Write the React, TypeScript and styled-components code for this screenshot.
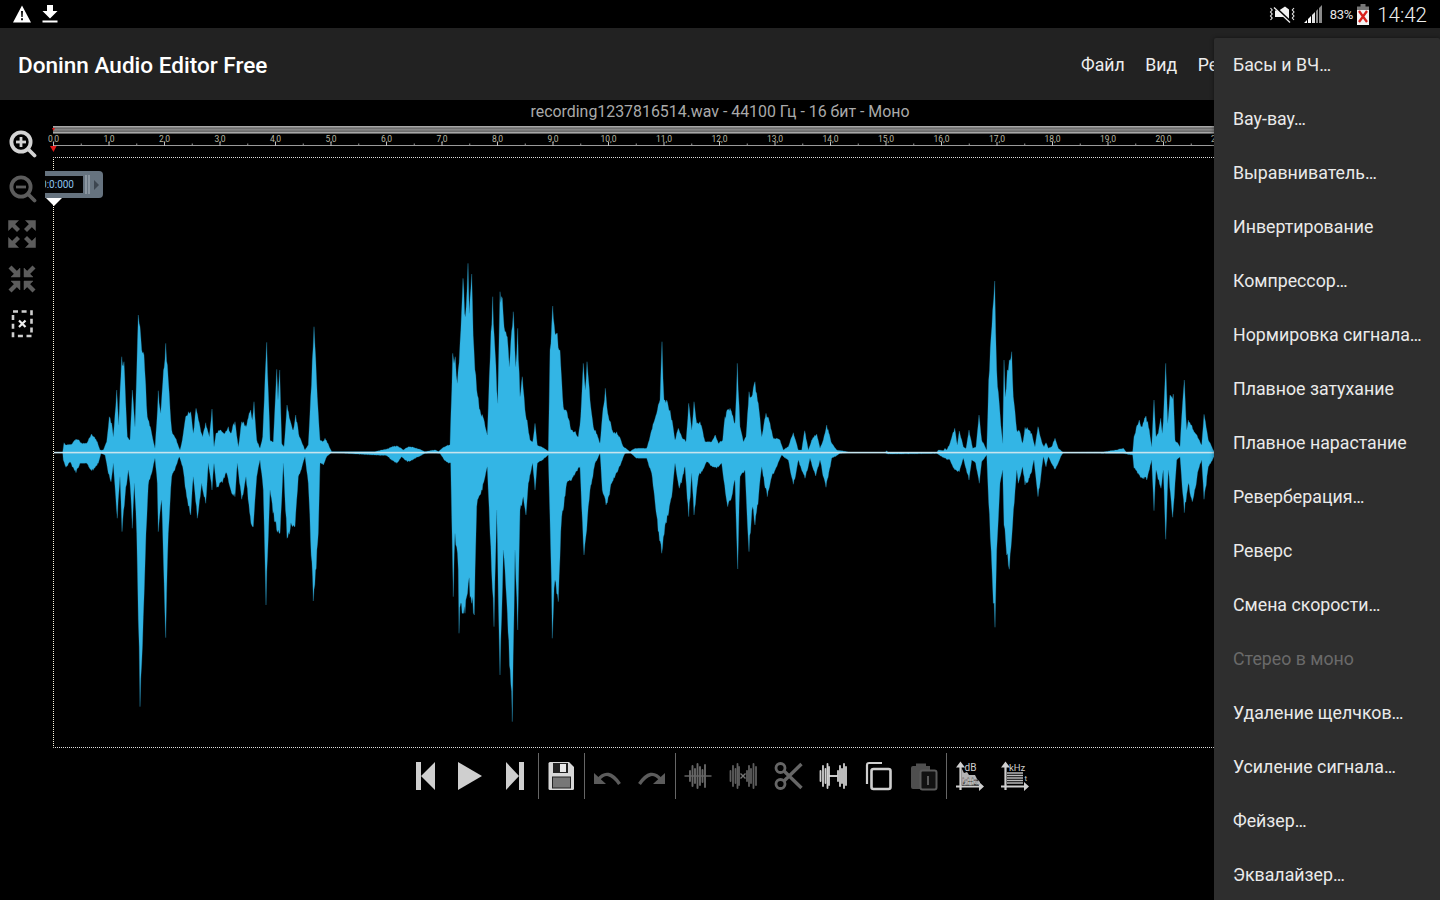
import React from 'react';
import styled, { createGlobalStyle } from 'styled-components';

const Global = createGlobalStyle`
  html, body { margin: 0; padding: 0; background: #000; }
  * { box-sizing: border-box; }
`;

const Screen = styled.div`
  position: relative; width: 1440px; height: 900px; overflow: hidden;
  display: flex; flex-direction: column; background: #000; color: #fff;
  font-family: Roboto, "Liberation Sans", sans-serif;
`;
const StatusBar = styled.div`
  height: 28px; flex: none; display: flex; align-items: center; justify-content: space-between;
  padding: 0 13px; background: #000;
`;
const StatusGroup = styled.div<{ $gap: number }>`
  display: flex; align-items: center; gap: ${p => p.$gap}px;
`;
const Battery = styled.span`font-size: 13px; color: #e4e4e4; letter-spacing: -0.2px; margin-right: -4px;`;
const Clock = styled.span`font-size: 20.5px; font-weight: 300; color: #eee; line-height: 28px; padding-top: 2px;`;
const AppBar = styled.div`
  height: 72px; flex: none; display: flex; align-items: center; padding-top: 2px; background: #222; overflow: hidden;
`;
const AppTitle = styled.div`
  flex: 1; padding-left: 18px; font-size: 22.55px; font-weight: 500; color: #fff; white-space: nowrap;
`;
const MenuBar = styled.div`
  width: 359px; flex: none; display: flex; gap: 20.5px; font-size: 17.7px; color: #eee; white-space: nowrap;
`;
const FileInfo = styled.div`
  height: 22px; flex: none; text-align: center; font-size: 15.9px; line-height: 24px; color: #aaa;
`;
const Workspace = styled.div`
  height: 626px; flex: none; display: flex;
`;
const Rail = styled.div`
  width: 53px; flex: none; display: flex; flex-direction: column; padding-right: 9px; margin-top: -1px;
`;
const RailButton = styled.div`
  height: 45px; display: flex; align-items: center; justify-content: center;
`;
const Timeline = styled.div`
  flex: 1; min-width: 0; display: flex; flex-direction: column;
`;
const RulerSvg = styled.svg`
  display: block; width: 1387px; height: 35px; flex: none; overflow: visible;
`;
const Canvas = styled.div`
  position: relative; width: 1387px; height: 591px; flex: none;
  border-top: 1px dotted #e0e0e0; border-bottom: 1px dotted #e0e0e0; border-left: 1px dotted #fff8e0;
`;
const WaveSvg = styled.svg`
  display: block; width: 1386px; height: 589px;
`;
const TimeBadge = styled.div`
  position: absolute; left: -9px; top: 13px; width: 58px; height: 27px;
  display: flex; align-items: center; background: #66737f; border-radius: 0 4px 4px 0;
`;
const TimeField = styled.div`
  width: 38px; height: 17px; background: #050505; overflow: hidden; display: flex;
  justify-content: flex-end; align-items: center; padding: 0 9px 1px 0;
  font-size: 10px; color: #8cc4ee; white-space: nowrap;
`;
const BadgeGrip = styled.div`
  flex: 1; display: flex; align-items: center; gap: 1px; padding-left: 2px;
`;
const GripLine = styled.div`width: 2px; height: 19px; background: #8b96a0;`;
const GripArrow = styled.div`
  width: 0; height: 0; margin-left: 3px;
  border-left: 5px solid #3d4650; border-top: 5px solid transparent; border-bottom: 5px solid transparent;
`;
const BadgePointer = styled.div`
  position: absolute; left: -8px; top: 40px; width: 0; height: 0;
  border-left: 8.5px solid transparent; border-right: 8.5px solid transparent; border-top: 8px solid #fff;
`;
const Toolbar = styled.div`
  height: 52px; flex: none; padding-top: 5px; display: flex; justify-content: center; align-items: flex-start;
`;
const ToolButton = styled.div`
  width: 45px; height: 46px; padding-right: 1px; display: flex; align-items: center; justify-content: center;
`;
const ToolDivider = styled.div`width: 1px; height: 46px; background: #666;`;
const EffectsMenu = styled.div`
  position: absolute; left: 1214px; top: 38px; width: 226px; height: 880px;
  background: #2e2e2e; border-radius: 2px; box-shadow: 0 0 4px rgba(0,0,0,.45);
`;
const EffectItem = styled.div<{ $off?: boolean }>`
  height: 54px; display: flex; align-items: center; padding: 0 0 0 19px; font-size: 17.75px;
  white-space: nowrap; color: ${p => (p.$off ? '#6a6a6a' : '#eaeaea')};
`;

type P = [number, number];
const CENTER = 452.5;
const flat = (a: number[]): P[] => { const r: P[] = []; for (let i = 0; i < a.length; i += 2) r.push([a[i], a[i + 1]]); return r; };
const rand = (n: number) => { const v = Math.sin(n * 127.1 + 11.7) * 43758.5453; return v - Math.floor(v); };

// Walks an outline of peaks and adds the fine sample-level roughness between them.
const roughen = (pts: P[], seed: number): P[] => {
  const out: P[] = [];
  pts.forEach((p, i) => {
    out.push(p);
    const q = pts[i + 1];
    if (!q) return;
    const steps = Math.floor((q[0] - p[0]) / 0.7);
    const limit = Math.max(Math.abs(p[1] - CENTER), Math.abs(q[1] - CENTER));
    for (let k = 1; k < steps; k++) {
      const t = k / steps;
      const x = p[0] + (q[0] - p[0]) * t;
      const y = p[1] + (q[1] - p[1]) * t;
      const amp = y - CENTER;
      const r = rand(seed + x * 3.3);
      const bulge = 1 + 0.14 * Math.sin(Math.PI * t) * Math.min(1, steps / 10);
      const value = Math.abs(amp) * bulge * (1 - r * 0.12);
      out.push([x, CENTER + Math.sign(amp) * Math.min(limit, value)]);
    }
  });
  return out;
};
const poly = (ox: number, oy: number, top: number[], bot: number[]) => {
  const page = (a: number[]) => flat(a).map(([x, y]): P => [ox + x / 3, oy + y / 3]);
  return [...roughen(page(top), ox), ...roughen(page(bot), ox + 7).reverse()]
    .map(([x, y]) => `${x.toFixed(1)},${y.toFixed(1)}`).join(' ');
};

const seg1 = poly(40, 250,
  [68,607,72,578,80,585,95,583,108,567,125,580,140,580,155,552,172,575,180,600,190,600,200,575,208,500,215,520,220,560,230,420,236,525,245,320,252,335,262,560,270,570,277,420,285,530,295,195,305,300,312,315,322,500,345,595,350,520,355,422,362,490,377,280,385,390,395,540,420,600,427,570,437,500,452,485,460,550,468,475,480,530,488,560,497,518,508,560,516,477,522,590,528,550,540,540,555,550,565,530,572,550,585,515,595,590,605,515,618,530,632,480,637,510,642,455,650,570,660,595,668,560,680,277,690,570,700,575,710,358,714,450,719,360,725,580,732,590,741,465,750,510,760,540,767,495,778,560,795,600,805,585,812,440,822,230,832,440,840,570,848,575,855,565,875,605,1005,605,1040,597,1070,587,1090,600,1105,590,1130,595,1155,605,1185,600,1195,605],
  [68,607,70,630,78,652,90,635,108,668,120,640,140,640,155,662,175,640,183,610,195,615,205,670,213,695,220,640,232,805,240,680,246,845,255,740,265,660,270,700,277,835,283,700,290,850,300,1370,310,1100,318,850,325,705,345,625,352,700,355,845,365,750,377,1163,385,850,395,680,418,620,428,650,440,740,452,795,460,680,472,805,485,700,497,760,505,640,516,720,522,640,530,712,560,670,575,730,585,740,592,640,605,748,618,680,633,820,640,830,650,680,660,630,670,720,678,1065,690,720,710,840,720,850,730,640,741,865,755,825,765,830,775,680,795,620,805,700,820,1053,835,850,840,640,850,645,860,620,875,607,1040,617,1070,640,1085,620,1103,635,1130,622,1155,610,1195,607]);
const seg2 = poly(430, 250,
  [0,607,15,600,25,605,40,592,60,585,68,310,72,340,76,320,82,400,90,280,99,85,106,200,114,40,118,190,125,72,132,300,140,420,150,480,172,555,178,380,188,140,195,300,203,460,210,125,217,145,225,245,232,260,238,350,250,185,257,350,263,235,270,440,277,380,285,480,300,570,308,575,315,520,322,585,355,603,360,300,368,168,375,250,382,250,390,300,400,470,425,540,445,560,452,500,460,340,466,420,471,335,480,450,490,530,510,580,517,500,526,415,533,490,550,550,560,545,580,590,600,605,615,595,650,595,660,560,680,490,690,450,696,275,702,450,710,450,720,480,735,570,745,535,755,560,768,575,776,460,785,540,792,455,800,520,810,515,825,575,845,575,856,555,865,580,878,570,885,500,900,475,915,520,922,340,930,530,940,575,948,560,957,425,965,440,975,395,985,460,995,560,1008,490,1020,520,1030,565,1050,570,1060,600,1075,590,1090,548,1105,600,1115,600,1124,542,1135,600,1145,570,1160,552,1170,595,1180,570,1190,525,1205,580,1220,600,1260,607],
  [0,607,30,610,45,632,62,640,65,800,70,1040,75,850,85,960,87,1150,92,1060,105,1090,115,1000,125,1060,133,1095,140,770,150,735,172,650,180,850,192,1130,200,780,210,1275,220,900,230,1050,247,1415,255,900,263,1140,270,780,280,740,288,795,295,700,308,640,315,720,322,640,355,615,362,900,367,1165,375,990,385,1055,395,800,410,700,450,650,460,880,462,915,470,840,480,720,495,640,510,610,517,720,528,765,545,700,585,610,600,607,620,625,650,625,665,670,695,910,705,825,725,740,735,640,748,715,765,650,776,800,785,670,792,795,805,680,830,635,860,655,875,640,893,770,905,740,915,690,923,957,930,680,945,660,957,905,968,770,975,825,995,650,1012,740,1025,680,1055,615,1075,630,1090,703,1105,630,1125,685,1140,625,1157,678,1170,630,1188,712,1205,625,1230,610,1260,607]);
const seg3 = poly(830, 270,
  [165,548,170,542,175,548,320,548,325,540,340,542,345,535,350,540,360,520,374,475,382,525,388,483,400,530,408,535,417,480,428,535,438,530,447,435,455,510,470,540,476,330,488,120,494,33,500,300,510,430,518,520,522,270,526,380,532,300,538,270,545,245,550,380,560,480,568,482,578,520,585,472,605,490,615,530,624,470,635,515,642,530,648,518,655,535,665,530,675,505,685,535,700,548,820,546,860,540,880,535,890,548,908,545,912,500,928,450,935,470,948,438,958,480,965,530,972,390,978,500,985,490,992,445,997,490,1000,455,1007,280,1013,460,1020,375,1030,372,1035,510,1050,530,1055,440,1063,330,1070,480,1075,450,1090,480,1115,525,1122,433,1135,510,1150,540,1155,548],
  [165,548,175,552,320,550,345,565,360,570,375,600,388,605,400,565,417,630,425,570,437,580,448,640,455,575,470,555,476,700,486,900,490,1000,495,1072,500,840,510,640,518,600,522,765,530,855,538,898,548,760,560,600,565,640,578,590,585,645,605,605,612,570,624,680,640,560,648,590,655,560,675,598,695,555,700,548,880,550,908,555,912,595,950,630,965,570,972,722,978,600,993,655,1000,600,1007,808,1015,600,1028,742,1040,570,1050,560,1063,728,1075,640,1087,695,1105,600,1115,570,1122,688,1135,590,1155,555]);

const ON = '#cfcfcf';
const OFF = '#5c5c5c';

const Icon: React.FC<{ children: React.ReactNode; s?: number }> = ({ children, s = 30 }) => (
  <svg width={s} height={s} viewBox="0 0 30 30">{children}</svg>
);

const Magnifier = ({ color, plus }: { color: string; plus?: boolean }) => (
  <Icon>
    <circle cx="14" cy="13" r="9.6" fill="none" stroke={color} strokeWidth="3.8" />
    <path d="M21 20 L27.5 26.5" stroke={color} strokeWidth="3.8" strokeLinecap="round" />
    <path d="M9 13 H19" stroke={color} strokeWidth="2.8" />
    {plus && <path d="M14 8 V18" stroke={color} strokeWidth="2.8" />}
  </Icon>
);
const corners = [[1, 1], [-1, 1], [1, -1], [-1, -1]];
const Expand = () => (
  <Icon>
    {corners.map(([a, b], i) => (
      <g key={i} transform={`translate(15 15) scale(${a} ${b})`} fill={OFF} stroke={OFF}>
        <path d="M-13.5 -13.5 H-3.5 L-13.5 -3.5 Z" strokeWidth="0.5" />
        <path d="M-10 -10 L-3.5 -3.5" strokeWidth="4.2" fill="none" />
      </g>
    ))}
  </Icon>
);
const Compress = () => (
  <Icon>
    {corners.map(([a, b], i) => (
      <g key={i} transform={`translate(15 15) scale(${a} ${b})`} fill={OFF} stroke={OFF}>
        <path d="M-2 -2 H-11 L-2 -11 Z" strokeWidth="0.5" />
        <path d="M-5 -5 L-12 -12" strokeWidth="4.2" fill="none" />
      </g>
    ))}
  </Icon>
);
const SelectClear = () => (
  <Icon>
    <rect x="6" y="2.5" width="18.5" height="24.5" fill="none" stroke={ON} strokeWidth="2.6" strokeDasharray="5 3.6" />
    <path d="M12 11.5 L18.5 18 M18.5 11.5 L12 18" stroke="#eee" strokeWidth="2.2" />
  </Icon>
);

const Prev = () => <Icon><path d="M6 1 H11 V29 H6 Z M25 1 V29 L11 15 Z" fill={ON} /></Icon>;
const Play = () => <Icon><path d="M3 1 L27 15 L3 29 Z" fill={ON} /></Icon>;
const Next = () => <Icon><path d="M6 1 L19 15 L6 29 Z M19 1 H24 V29 H19 Z" fill={ON} /></Icon>;
const Save = () => (
  <Icon>
    <path d="M4 1 H23 L28 6 V27.5 Q28 29 26.5 29 H4 Q2.5 29 2.5 27.5 V2.5 Q2.5 1 4 1 Z" fill="#d8d8d8" />
    <rect x="7" y="2" width="15" height="10" fill="#222" />
    <rect x="14" y="3" width="6" height="8" fill="#e8e8e8" />
    <rect x="6.5" y="16" width="18" height="11" fill="#777" stroke="#222" strokeWidth="1" />
  </Icon>
);
const Undo = ({ flip }: { flip?: boolean }) => (
  <Icon>
    <g transform={flip ? 'translate(30 0) scale(-1 1)' : undefined}>
      <path d="M2 12 V23 H14 Z" fill={OFF} />
      <path d="M6 19 Q16 6 27.5 23" fill="none" stroke={OFF} strokeWidth="3.4" />
    </g>
  </Icon>
);
const waveBars = (xs: number[], c: string, w = 1.6) =>
  xs.map((x, i) => {
    const h = [5, 10, 7, 12, 9, 6, 11, 8, 4][i % 9];
    return <path key={x} d={`M${x} ${15 - h} V${15 + h}`} stroke={c} strokeWidth={w} strokeLinecap="round" />;
  });
const Wave = () => (
  <Icon>
    <path d="M1.5 15 H28.5" stroke={OFF} strokeWidth="1.6" />
    {waveBars([7, 9.5, 12, 14.5, 17, 19.5, 22], '#666', 1.9)}
  </Icon>
);
const WaveCut = () => (
  <Icon>
    {waveBars([2.5, 5, 7.5, 9.5, 11], '#5e5e5e', 1.8)}
    <path d="M12.5 12.5 L17.5 17.5 M17.5 12.5 L12.5 17.5" stroke="#777" strokeWidth="1.4" />
    {waveBars([19, 21, 23, 25.5, 28], '#5e5e5e', 1.8)}
  </Icon>
);
const Scissors = () => (
  <Icon>
    <circle cx="7.5" cy="7" r="4.5" fill="none" stroke="#666" strokeWidth="2.8" />
    <circle cx="7.5" cy="23" r="4.5" fill="none" stroke="#666" strokeWidth="2.8" />
    <path d="M11 10 L28.5 27 M11 20 L28.5 3" stroke="#666" strokeWidth="3.4" />
  </Icon>
);
const WaveTrim = () => (
  <Icon>
    {waveBars([2.5, 5, 7.5, 9.5, 11], '#d0d0d0', 1.8)}
    <path d="M11 15 H20" stroke="#e0e0e0" strokeWidth="1.8" />
    {waveBars([20, 22, 24, 26, 28], '#d0d0d0', 1.8)}
  </Icon>
);
const Copy = () => (
  <Icon>
    <path d="M4 23 V4 Q4 2 6 2 H19" fill="none" stroke={ON} strokeWidth="2.2" />
    <rect x="8.5" y="8" width="19" height="20" rx="2" fill="none" stroke={ON} strokeWidth="2.6" />
  </Icon>
);
const Paste = () => (
  <Icon>
    <path d="M3 7 Q3 5 5 5 H8 V2.5 H18 V5 H22 V28 H5 Q3 28 3 26 Z" fill="#4e4e4e" />
    <rect x="12.5" y="9.5" width="16" height="19" rx="2" fill="#111" stroke="#5a5a5a" strokeWidth="2" />
    <path d="M20 15 V24" stroke="#5a5a5a" strokeWidth="2" />
  </Icon>
);
const Axes = () => (
  <>
    <path d="M6.5 29 V4 M2 25.5 H27" stroke={ON} strokeWidth="2.2" fill="none" />
    <path d="M6.5 0.5 L2 6.5 H11 Z M30 25.5 L25 21 V30 Z" fill={ON} />
  </>
);
const Spectrum = () => (
  <Icon>
    <Axes />
    <path d="M7.5 24 V7 L10 12 L13 11 L15 14 H21 L23 18 L26 21 V24 Z" fill="#b4b4b4" />
    <text x="10.5" y="9.5" fontSize="10" fill={ON} fontFamily="Roboto, sans-serif">dB</text>
    <text x="8" y="23.5" fontSize="9.5" fontWeight="500" fill="#fff" stroke="#000" strokeWidth="0.3" fontFamily="Roboto, sans-serif">kHz</text>
  </Icon>
);
const Sonogram = () => (
  <Icon>
    <Axes />
    {[12, 14.5, 17, 19.5, 22].map(y => <path key={y} d={`M8 ${y} H24`} stroke="#bcbcbc" strokeWidth="1.5" />)}
    <text x="10" y="10" fontSize="9.5" fill={ON} fontFamily="Roboto, sans-serif">kHz</text>
    <text x="25.5" y="20" fontSize="8" fill={ON} fontFamily="Roboto, sans-serif">t</text>
  </Icon>
);

const Warning = () => (
  <svg width="18" height="18" viewBox="0 0 18 18">
    <path d="M9 0.5 L18 17.5 H0 Z" fill="#fff" />
    <path d="M8 6 H10 L9.7 12 H8.3 Z M8 13.3 H10 V15.2 H8 Z" fill="#111" />
  </svg>
);
const Download = () => (
  <svg width="18" height="18" viewBox="0 0 18 18">
    <path d="M6 0 H12 V6 H16.5 L9 13.5 L1.5 6 H6 Z M1.5 15.5 H16.5 V17.5 H1.5 Z" fill="#fff" />
  </svg>
);
const VibrateOff = () => (
  <svg width="27" height="18" viewBox="0 0 27 18">
    <path d="M6 5.5 H10 L16 1.5 L20 4.5 V16 L15 12 H10 L6 12 Z" fill="#f2f2f2" />
    <path d="M5 1 L22 17" stroke="#000" strokeWidth="2" />
    <path d="M5 2.5 L21 17.5" stroke="#f2f2f2" strokeWidth="1.2" />
    <path d="M1.5 3 L3.2 5 L1.5 7 L3.2 9 L1.5 11 L3.2 13 L1.5 15 M25 3 L23.3 5 L25 7 L23.3 9 L25 11 L23.3 13 L25 15" fill="none" stroke="#e8e8e8" strokeWidth="1.1" />
  </svg>
);
const Signal = () => (
  <svg width="18" height="18" viewBox="0 0 18 18">
    <path d="M0 18 L3 15 V18 Z M4 18 V14 L7 11 V18 Z" fill="#fff" />
    <path d="M8 18 V10 L11 7 V18 Z" fill="#e0e0e0" />
    <path d="M12 18 V6 L14 4 V18 Z M15 18 V3 L18 0 V18 Z" fill="#8a8a8a" />
  </svg>
);
const BatteryIcon = () => (
  <svg width="12" height="21" viewBox="0 0 12 21">
    <rect x="3.5" y="0" width="5" height="3" fill="#777" />
    <rect x="0" y="2.5" width="12" height="4" fill="#777" />
    <rect x="0" y="6" width="12" height="15" fill="#f4f4f4" />
    <path d="M2 7 L10 18 M10 7 L2 18" stroke="#d8201c" strokeWidth="2.3" />
  </svg>
);

const effects: [string, boolean?][] = [
  ['Басы и ВЧ…'], ['Вау-вау…'], ['Выравниватель…'], ['Инвертирование'], ['Компрессор…'],
  ['Нормировка сигнала…'], ['Плавное затухание'], ['Плавное нарастание'], ['Реверберация…'], ['Реверс'],
  ['Смена скорости…'], ['Стерео в моно', true], ['Удаление щелчков…'], ['Усиление сигнала…'], ['Фейзер…'], ['Эквалайзер…'],
];

const PX_PER_SEC = 55.5;

const Ruler = () => {
  const seconds = Array.from({ length: 25 }, (_, i) => i);
  return (
    <RulerSvg viewBox="0 0 1387 35">
      <rect x="0" y="4" width="1387" height="7.5" fill="#6c6c6c" />
      <rect x="0" y="4" width="1387" height="1.4" fill="#a8a8a8" />
      <rect x="0" y="10" width="1387" height="1.4" fill="#a8a8a8" />
      <rect x="0" y="7" width="1387" height="1.5" fill="#858585" />
      <path d="M-1 6 H2 L0.5 9 Z" fill="#e01818" />
      <rect x="0" y="23" width="1387" height="1" fill="#9a9a9a" />
      {seconds.map(s => {
        const x = 0.5 + s * PX_PER_SEC;
        return (
          <g key={s}>
            <rect x={x - 0.5} y="20" width="1" height="4" fill="#c0c0c0" />
            <rect x={x - 0.5 + PX_PER_SEC / 2} y="21.5" width="1" height="2" fill="#999" />
            <text x={x} y="20" textAnchor="middle" fontSize="8.5" fill="#b9b8a4" fontFamily="Roboto, sans-serif">{`${s},0`}</text>
          </g>
        );
      })}
      <path d="M-3 24 H3.6 L0.5 30 Z" fill="#e01818" />
    </RulerSvg>
  );
};

export default function App() {
  return (
    <Screen>
      <Global />
      <StatusBar>
        <StatusGroup $gap={10}><Warning /><Download /></StatusGroup>
        <StatusGroup $gap={8}>
          <VibrateOff /><Signal /><Battery>83%</Battery><BatteryIcon /><Clock>14:42</Clock>
        </StatusGroup>
      </StatusBar>
      <AppBar>
        <AppTitle>Doninn Audio Editor Free</AppTitle>
        <MenuBar><span>Файл</span><span>Вид</span><span>Редактировать</span></MenuBar>
      </AppBar>
      <FileInfo>recording1237816514.wav - 44100 Гц - 16 бит - Моно</FileInfo>
      <Workspace>
        <Rail>
          <RailButton><Magnifier color="#d4d4d4" plus /></RailButton>
          <RailButton><Magnifier color="#5c5c5c" /></RailButton>
          <RailButton><Expand /></RailButton>
          <RailButton><Compress /></RailButton>
          <RailButton><SelectClear /></RailButton>
        </Rail>
        <Timeline>
          <Ruler />
          <Canvas>
            <WaveSvg viewBox="54 158 1386 589">
              <g fill="#33b5e5" stroke="#2a93bb" strokeWidth="0.3" strokeLinejoin="round">
                <polygon points={seg1} />
                <polygon points={seg2} />
                <polygon points={seg3} />
              </g>
              <rect x="54" y="451.8" width="1386" height="1.6" fill="#c6e4ee" />
            </WaveSvg>
            <TimeBadge>
              <TimeField>0:0:000</TimeField>
              <BadgeGrip><GripLine /><GripLine /><GripArrow /></BadgeGrip>
            </TimeBadge>
            <BadgePointer />
          </Canvas>
        </Timeline>
      </Workspace>
      <Toolbar>
        <ToolButton><Prev /></ToolButton>
        <ToolButton><Play /></ToolButton>
        <ToolButton><Next /></ToolButton>
        <ToolDivider />
        <ToolButton><Save /></ToolButton>
        <ToolDivider />
        <ToolButton><Undo /></ToolButton>
        <ToolButton><Undo flip /></ToolButton>
        <ToolDivider />
        <ToolButton><Wave /></ToolButton>
        <ToolButton><WaveCut /></ToolButton>
        <ToolButton><Scissors /></ToolButton>
        <ToolButton><WaveTrim /></ToolButton>
        <ToolButton><Copy /></ToolButton>
        <ToolButton><Paste /></ToolButton>
        <ToolDivider />
        <ToolButton><Spectrum /></ToolButton>
        <ToolButton><Sonogram /></ToolButton>
      </Toolbar>
      <EffectsMenu>
        {effects.map(([label, off]) => <EffectItem key={label} $off={off}>{label}</EffectItem>)}
      </EffectsMenu>
    </Screen>
  );
}
